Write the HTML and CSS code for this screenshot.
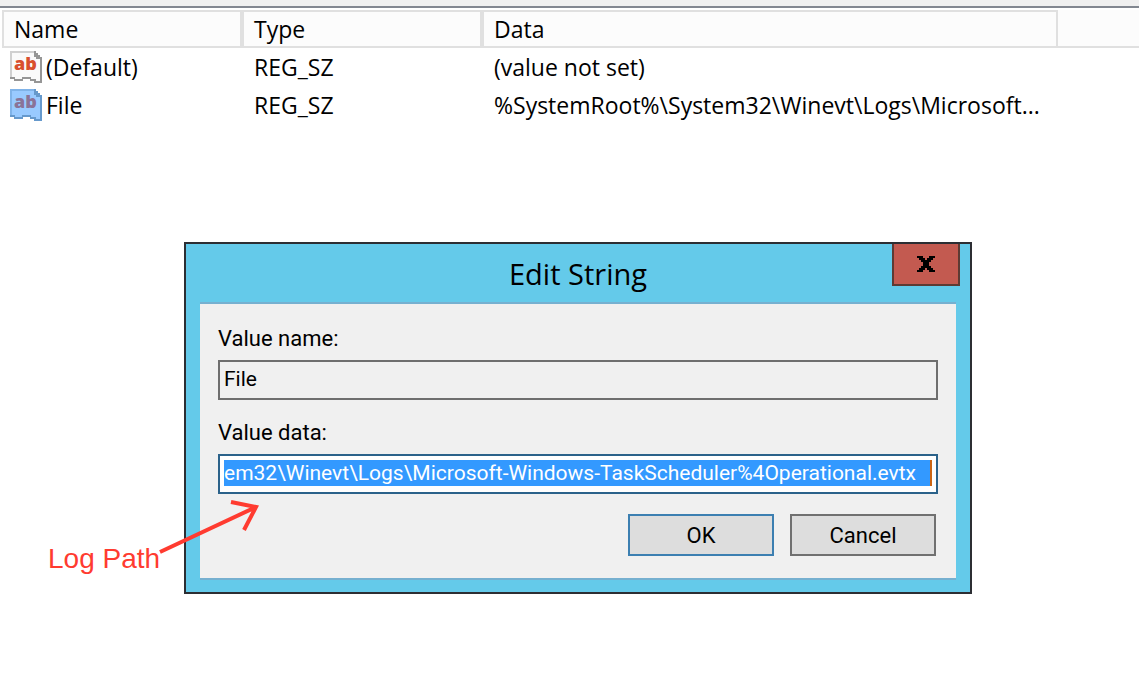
FILE: index.html
```html
<!DOCTYPE html>
<html lang="en">
<head>
<meta charset="utf-8">
<title>Registry Editor</title>
<link rel="stylesheet" href="styles.css">
</head>
<body>
<main class="desktop">
  <div class="toolbar-edge"></div>
  <table class="values">
    <colgroup><col class="col-name"><col class="col-type"><col class="col-data"><col></colgroup>
    <thead>
      <tr><th>Name</th><th>Type</th><th>Data</th><td class="filler"></td></tr>
    </thead>
    <tbody>
      <tr>
        <td><span class="entry"><svg class="icon" viewBox="0 0 32 32" aria-hidden="true">
          <path class="paper" d="M1 1H25L31 7V31H25V29H21V27H13V29H5V27H1Z"/>
          <path class="edge" d="M1 27V1H25"/>
          <path class="torn" d="M0 27H5M4 29H13M12 27H21M20 29H26M24 31H31V7H27V5M25 0V5H29V7M27 2V4"/>
          <text class="ab" x="4" y="19">ab</text>
        </svg>(Default)</span></td>
        <td>REG_SZ</td><td>(value not set)</td><td></td>
      </tr>
      <tr>
        <td><span class="entry"><svg class="icon selected" viewBox="0 0 32 32" aria-hidden="true">
          <path class="paper" d="M1 1H25L31 7V31H25V29H21V27H13V29H5V27H1Z"/>
          <path class="edge" d="M1 27V1H25"/>
          <path class="torn" d="M0 27H5M4 29H13M12 27H21M20 29H26M24 31H31V7H27V5M25 0V5H29V7M27 2V4"/>
          <text class="ab" x="4" y="19">ab</text>
        </svg>File</span></td>
        <td>REG_SZ</td><td>%SystemRoot%\System32\Winevt\Logs\Microsoft...</td><td></td>
      </tr>
    </tbody>
  </table>

  <section class="dialog" role="dialog" aria-labelledby="dialog-title">
    <header class="titlebar">
      <h1 id="dialog-title">Edit String</h1>
      <button class="close" type="button" aria-label="Close">
        <svg viewBox="0 0 18 16" width="18" height="16"><path d="M0 0H6V2H8V4H10V2H12V0H18V2H16V4H14V6H12V10H14V12H16V14H18V16H12V14H10V12H8V14H6V16H0V14H2V12H4V10H6V6H4V4H2V2H0Z"/></svg>
      </button>
    </header>
    <form class="panel">
      <label for="value-name">Value name:</label>
      <div class="field readonly"><input id="value-name" type="text" value="File" readonly></div>
      <label for="value-data">Value data:</label>
      <div class="field focused"><input id="value-data" type="text" value="em32\Winevt\Logs\Microsoft-Windows-TaskScheduler%4Operational.evtx"></div>
      <div class="actions">
        <button class="default" type="button">OK</button>
        <button type="button">Cancel</button>
      </div>
    </form>
  </section>

  <div class="note">Log Path</div>
  <svg class="arrow" viewBox="0 0 104 60" aria-hidden="true"><path d="M4 55L100 10M75 5L100 10L88 33"/></svg>
</main>
</body>
</html>
```
FILE: styles.css
```css
* { box-sizing: border-box; }
body {
  margin: 0;
  background: #fff;
  color: #000;
  font-family: "Open Sans", "Noto Sans", sans-serif;
  font-size: 23px;
}
.desktop { position: relative; min-height: 100vh; overflow: hidden; }
.toolbar-edge {
  height: 8px;
  margin-bottom: 2px;
  background: #f0f0f0;
  border-bottom: 2px solid #828790;
}

.values {
  width: 100%;
  padding-left: 2px;
  table-layout: fixed;
  border-collapse: separate;
  border-spacing: 0;
  line-height: 34px;
}
.col-name, .col-type { width: 240px; }
.col-data { width: 576px; }
.values th, .values td {
  height: 38px;
  padding: 0 0 0 12px;
  text-align: left;
  font-weight: 400;
  white-space: nowrap;
}
.values th {
  padding-left: 10px;
  background: #fcfcfc;
  border: 2px solid #e0e0e0;
}
.values .filler { background: #fcfcfc; border-bottom: 2px solid #e0e0e0; }
.values tbody td:first-child { padding-left: 8px; }
.entry { display: flex; align-items: center; gap: 4px; }
.icon { width: 32px; height: 32px; flex: none; }
.paper { fill: #fafafa; }
.edge { fill: none; stroke: #d0d0d0; stroke-width: 2; }
.torn { fill: none; stroke: #969696; stroke-width: 2; }
.ab { fill: #d9502e; font: 800 18px "Open Sans", sans-serif; }
.selected .paper { fill: #99caff; }
.selected .edge { stroke: #80b3e8; }
.selected .torn { stroke: #6699cc; }
.selected .ab { fill: #8a7398; }

.dialog {
  position: absolute;
  top: 242px;
  left: 184px;
  width: 788px;
  padding: 0 14px 12px;
  background: #64caea;
  border: 2px solid #2c2e33;
  font-family: Roboto, "Liberation Sans", sans-serif;
  font-size: 22px;
}
.titlebar {
  position: relative;
  display: flex;
  align-items: center;
  justify-content: center;
  height: 58px;
}
.titlebar h1 {
  margin: 0;
  font: 400 29px "Open Sans", "Noto Sans", sans-serif;
}
.close {
  position: absolute;
  top: 0;
  right: -4px;
  display: flex;
  align-items: center;
  justify-content: center;
  width: 68px;
  height: 42px;
  padding: 0;
  background: #c35a50;
  border: 2px solid #5e3a33;
  border-top: 0;
}
.panel {
  padding: 20px 18px 22px;
  background: #f0f0f0;
  border: solid #76b0d0;
  border-width: 2px 0;
}
.panel label { display: block; line-height: 30px; }
.field {
  height: 40px;
  margin: 6px 0 18px;
  padding: 4px;
  border: 2px solid #6e6e6e;
  font-size: 21px;
}
.field input {
  display: block;
  width: 100%;
  height: 26px;
  padding: 0;
  border: 0;
  outline: 0;
  background: transparent;
  color: inherit;
  font: inherit;
}
.focused { margin-bottom: 20px; background: #fff; border-color: #2b628a; }
.focused input { background: #39f; border-right: 2px solid #cc6614; color: #fff; }
.actions {
  display: flex;
  justify-content: flex-end;
  gap: 16px;
  padding-right: 2px;
}
.actions button {
  width: 146px;
  height: 42px;
  background: #ddd;
  border: 2px solid #707070;
  color: #000;
  font: inherit;
}
.actions .default { border-color: #3c7fb1; }

.note {
  position: absolute;
  top: 542px;
  left: 48px;
  color: #ff3b30;
  font: 28px/34px "Liberation Sans", Arial, sans-serif;
}
.arrow {
  position: absolute;
  top: 497px;
  left: 156px;
  width: 104px;
  height: 60px;
  fill: none;
  stroke: #ff3b30;
  stroke-width: 4;
}
```
